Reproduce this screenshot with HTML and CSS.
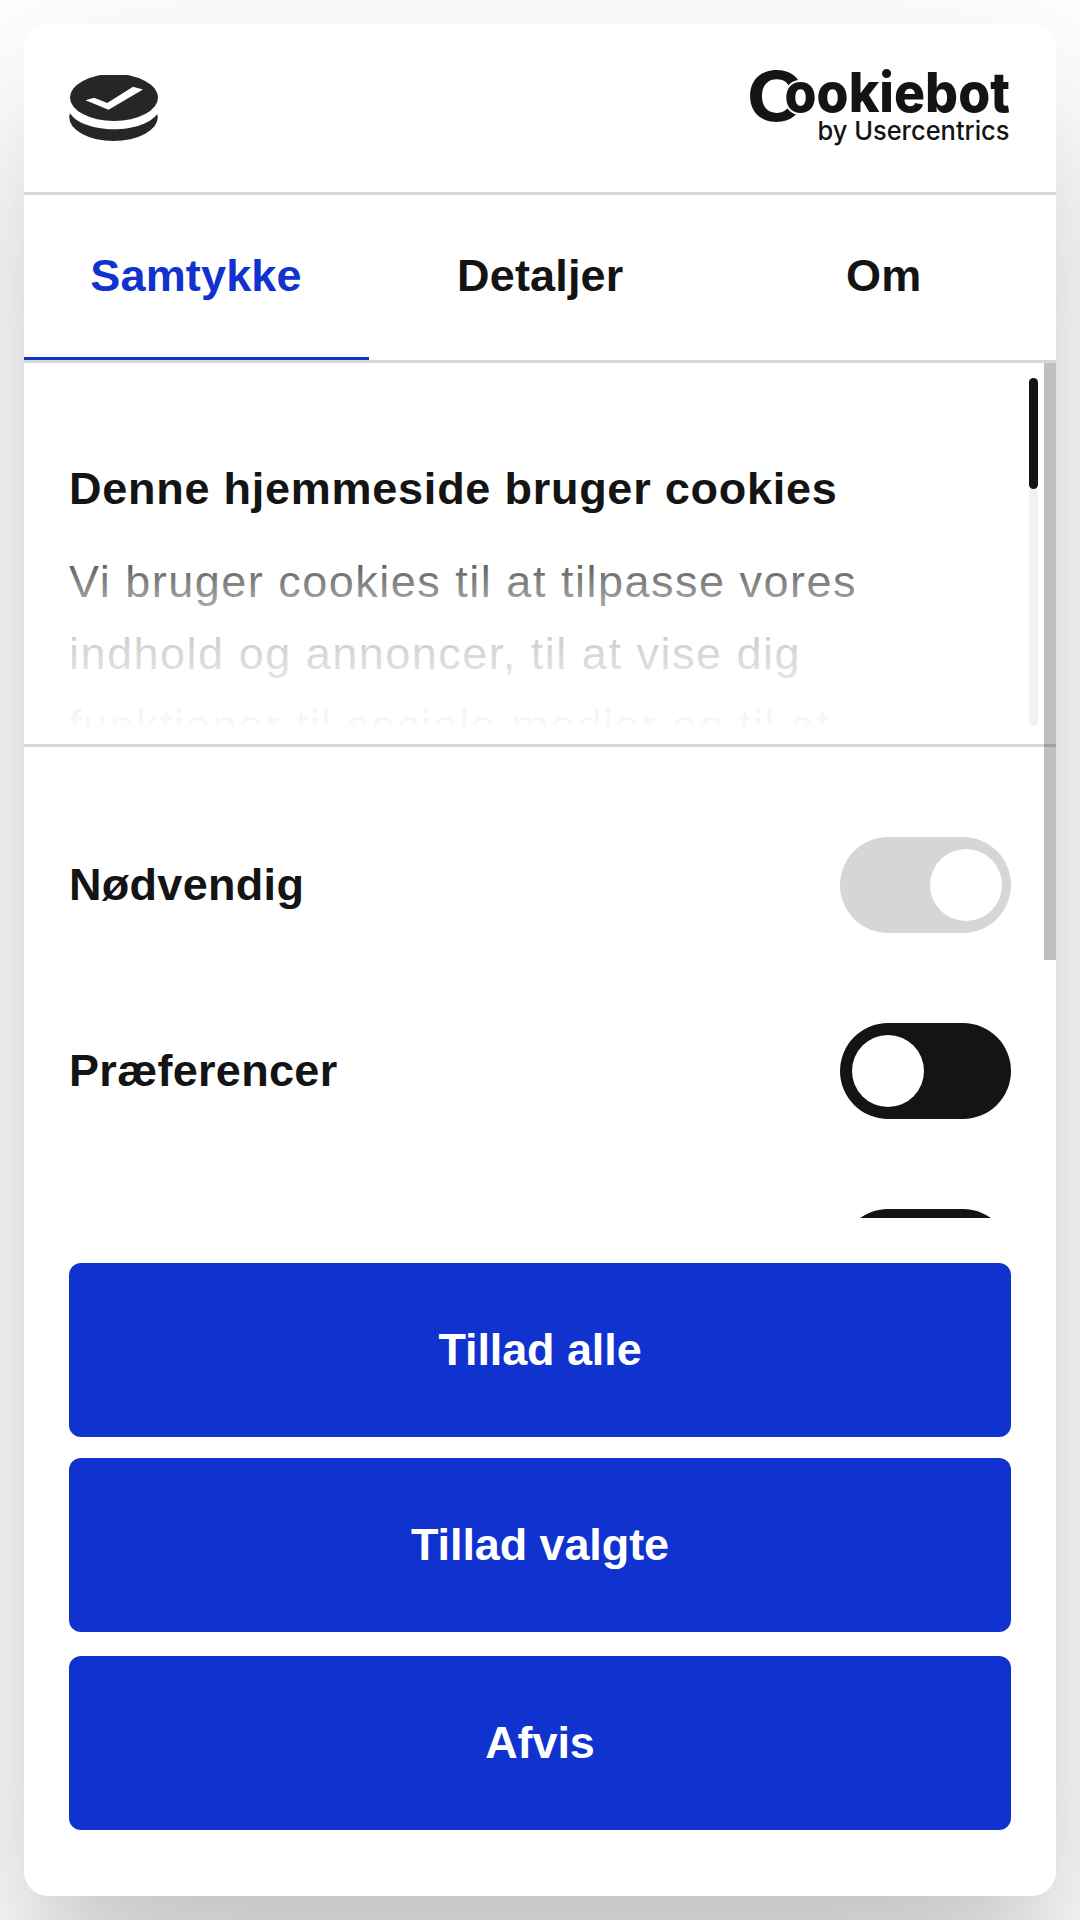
FILE: index.html
```html
<!DOCTYPE html>
<html lang="da">
<head>
  <meta charset="UTF-8">
  <meta name="viewport" content="width=device-width, initial-scale=1.0">
  <title>Cookiebot</title>
  <link rel="stylesheet" href="styles.css">
</head>
<body>
  <div class="dialog" role="dialog" aria-label="Cookies">
    <header class="header">
      <svg class="badge" viewBox="0 0 90 68" width="90" height="68">
        <ellipse cx="44.5" cy="42" rx="44.3" ry="24" fill="#262626"/>
        <path d="M-2 18H92V31C86 62 3 62 -2 31z" fill="#fff"/>
        <ellipse cx="45" cy="22.5" rx="44" ry="23.5" fill="#262626"/>
        <path d="M16.5 25.2L25 22.7 38.3 28 64 11.7 74 14.5 39.5 34.8z" fill="#fff"/>
      </svg>
      <svg class="brand" viewBox="0 0 262 80" width="262" height="80">
        <text class="brand-c" x="-2.5" y="51.5" textLength="58" lengthAdjust="spacingAndGlyphs">C</text>
        <text class="brand-name" x="35.5" y="42.5" textLength="225.5" lengthAdjust="spacingAndGlyphs">ookiebot</text>
        <text class="brand-by" x="68.5" y="70.5" textLength="192" lengthAdjust="spacingAndGlyphs">by Usercentrics</text>
      </svg>
    </header>

    <nav class="tabs">
      <a class="tab active">Samtykke</a>
      <a class="tab">Detaljer</a>
      <a class="tab">Om</a>
    </nav>

    <div class="body">
      <section class="intro">
        <div class="intro-text">
          <h2>Denne hjemmeside bruger cookies</h2>
          <p>Vi bruger cookies til at tilpasse vores indhold og annoncer, til at vise dig funktioner til sociale medier og til at</p>
        </div>
        <div class="track"><div class="thumb"></div></div>
      </section>

      <section class="options">
        <div class="option">
          <span>Nødvendig</span>
          <div class="toggle locked"></div>
        </div>
        <div class="option">
          <span>Præferencer</span>
          <div class="toggle"></div>
        </div>
        <div class="option">
          <span></span>
          <div class="toggle"></div>
        </div>
      </section>
      <div class="page-thumb"></div>
    </div>

    <footer class="actions">
      <button>Tillad alle</button>
      <button>Tillad valgte</button>
      <button class="decline">Afvis</button>
    </footer>
  </div>
</body>
</html>
```
FILE: styles.css
```css
* {
  box-sizing: border-box;
}
body {
  margin: 0;
  padding: 24px;
  height: 1920px;
  overflow: hidden;
  background: #fff;
  color: #141414;
  font-family: "Liberation Sans", Arial, sans-serif;
  font-size: 45px;
}
.dialog {
  display: flex;
  flex-direction: column;
  height: 1872px;
  border-radius: 24px;
  background: #fff;
  box-shadow: 0 96px 204px rgba(0, 0, 0, 0.21), 0 72px 60px -24px rgba(0, 0, 0, 0.06);
}

/* header */
.header {
  display: flex;
  justify-content: space-between;
  height: 171px;
  padding: 45px 45px 0;
  border-bottom: 3px solid #d6d6d6;
}
.badge {
  margin-top: 6px;
}
.brand {
  overflow: visible;
}
.brand text {
  fill: #141414;
}
.brand-c {
  font: 700 69px Inter, sans-serif;
}
.brand .brand-name {
  font: 800 55px Inter, sans-serif;
  stroke: #fff;
  stroke-width: 4px;
  paint-order: stroke;
}
.brand-by {
  font: 500 26px Inter, sans-serif;
}

/* tabs */
.tabs {
  display: flex;
  height: 168px;
  border-bottom: 3px solid #d6d6d6;
}
.tab {
  display: flex;
  flex: 1;
  align-items: center;
  justify-content: center;
  padding-right: 1px;
  border-bottom: 3px solid transparent;
  font-weight: bold;
  letter-spacing: 0.15px;
}
.tab.active {
  flex: 0 0 345px;
  border-color: #1032cf;
  color: #1032cf;
}

/* scrolling area */
.body {
  position: relative;
  height: 855px;
  overflow: hidden;
}
.intro {
  position: relative;
  display: flex;
  justify-content: space-between;
  height: 384px;
  padding: 15px 18px 18px 45px;
  border-bottom: 3px solid #d6d6d6;
}
.intro-text {
  height: 348px;
  padding-top: 75px;
  width: 860px;
  overflow: hidden;
}
.intro-text::after {
  content: "";
  position: absolute;
  left: 0;
  right: 30px;
  top: 147px;
  height: 230px;
  background: linear-gradient(rgba(255, 255, 255, 0), rgba(255, 255, 255, 0.3) 22%, rgba(255, 255, 255, 0.56) 37%, rgba(255, 255, 255, 0.8) 56%, rgba(255, 255, 255, 0.95) 86%, #fff);
}
.intro h2 {
  margin: 0 0 21px;
  font-size: 45px;
  line-height: 72px;
  letter-spacing: 0.75px;
}
.intro p {
  margin: 0;
  line-height: 72px;
  letter-spacing: 1.5px;
}
.track {
  width: 9px;
  border-radius: 5px;
  background: #f2f2f2;
}
.thumb {
  height: 111px;
  border-radius: 5px;
  background: #141414;
}
.options {
  padding: 45px 45px 0;
}
.option {
  display: flex;
  align-items: center;
  justify-content: space-between;
  height: 186px;
  font-weight: bold;
  letter-spacing: 0.3px;
}
.toggle {
  display: flex;
  align-items: center;
  width: 171px;
  height: 96px;
  padding: 0 9px 0 12px;
  border-radius: 48px;
  background: #141414;
}
.toggle::before {
  content: "";
  width: 72px;
  height: 72px;
  border-radius: 50%;
  background: #fff;
}
.toggle.locked {
  justify-content: flex-end;
  background: #d6d6d6;
}
.page-thumb {
  position: absolute;
  top: 0;
  right: 0;
  width: 12px;
  height: 597px;
  background: rgba(0, 0, 0, 0.25);
}

/* buttons */
.actions {
  display: flex;
  flex-direction: column;
  gap: 21px;
  padding: 45px 45px 0;
}
.actions button {
  height: 174px;
  border: 0;
  border-radius: 12px;
  background: #1032cf;
  color: #fff;
  font: bold 45px "Liberation Sans", Arial, sans-serif;
  letter-spacing: -0.1px;
}
.actions .decline {
  margin-top: 3px;
}
```
